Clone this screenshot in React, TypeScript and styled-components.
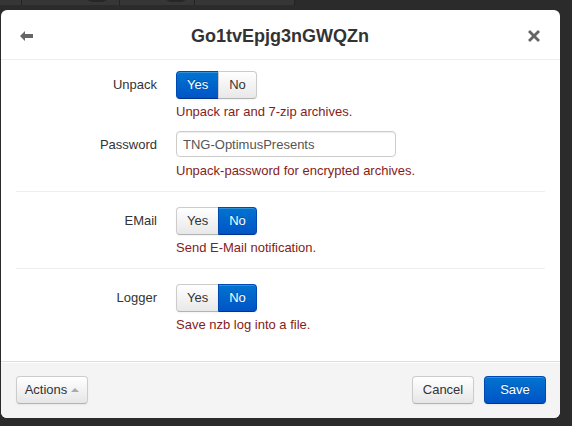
import React from "react";
import styled, { createGlobalStyle, css } from "styled-components";

const Global = createGlobalStyle`
  html, body { margin: 0; padding: 0; }
  body {
    background: #2b2b2b;
    font-family: "Liberation Sans", Arial, Helvetica, sans-serif;
    font-size: 13px;
    line-height: 18px;
    color: #333;
    width: 572px;
    height: 426px;
    overflow: hidden;
  }
`;

const Page = styled.div`
  width: 572px;
  height: 426px;
  display: flex;
  flex-direction: column;
`;

const TopBar = styled.div`
  height: 10px;
  overflow: hidden;
  display: flex;
  align-items: flex-end;
`;

const Toolbar = styled.div`
  display: flex;
  height: 24px;
  margin-bottom: 5px;
  flex-shrink: 0;
`;

const ToolButton = styled.div<{ $w: number }>`
  width: ${(p) => p.$w}px;
  height: 24px;
  background: #363636;
  border-right: 1px solid #242424;
  color: #8a8a8a;
  font-size: 13px;
  line-height: 24px;
  display: flex;
  align-items: center;
  justify-content: center;
  gap: 8px;
  box-sizing: border-box;
`;

const ToolBadge = styled.span`
  display: inline-block;
  width: 26px;
  height: 18px;
  border-radius: 9px;
  background: #262626;
  color: #555;
  font-size: 11px;
  line-height: 18px;
  text-align: center;
`;

const Modal = styled.div`
  margin-left: 1px;
  width: 559px;
  height: 408px;
  background: #fff;
  border-radius: 6px;
  display: flex;
  flex-direction: column;
  overflow: hidden;
`;

const Header = styled.div`
  height: 49px;
  border-bottom: 1px solid #eee;
  display: flex;
  align-items: center;
  padding: 0 18px 0 17px;
  box-sizing: content-box;
`;

const Title = styled.h3`
  flex: 1;
  margin: 0;
  text-align: center;
  font-size: 18px;
  font-weight: bold;
  line-height: 20px;
  color: #333;
  padding-top: 3px;
`;

const IconBtn = styled.span`
  width: 16px;
  height: 16px;
  display: flex;
  align-items: center;
  justify-content: center;
  color: #666;
  margin-top: 2px;
`;

const Body = styled.div`
  flex: 1;
  padding: 0 15px;
`;

const Section = styled.div<{ $first?: boolean; $last?: boolean }>`
  padding: ${(p) => (p.$first ? "11px 0 11px" : "15px 0 11px")};
  border-bottom: ${(p) => (p.$last ? "none" : "1px solid #eee")};
`;

const Group = styled.div`
  display: flex;
  & + & {
    margin-top: 10px;
  }
`;

const Label = styled.label<{ $top?: number }>`
  width: 141px;
  flex-shrink: 0;
  text-align: right;
  padding-right: 19px;
  padding-top: ${(p) => p.$top ?? 5}px;
  line-height: 18px;
  color: #333;
`;

const Controls = styled.div`
  display: flex;
  flex-direction: column;
  align-items: flex-start;
`;

const Help = styled.div<{ $gap?: number }>`
  color: #861b1b;
  margin-top: ${(p) => p.$gap ?? 4}px;
  line-height: 18px;
`;

const btnBase = css`
  font-family: "Liberation Sans", Arial, Helvetica, sans-serif;
  font-size: 13px;
  line-height: 18px;
  padding: 4px 10px;
  height: 28px;
  box-sizing: border-box;
  border: 1px solid #ccc;
  border-bottom-color: #b3b3b3;
  background: linear-gradient(#ffffff, #e6e6e6);
  color: #333;
  border-radius: 4px;
  box-shadow: inset 0 1px 0 rgba(255, 255, 255, 0.2), 0 1px 2px rgba(0, 0, 0, 0.05);
  cursor: pointer;
`;

const primary = css`
  color: #fff;
  background: linear-gradient(#0074d0, #0054c6);
  border-color: #0049b0 #0049b0 #00348a;
  text-shadow: 0 -1px 0 rgba(0, 0, 0, 0.25);
`;

const ButtonGroup = styled.div`
  display: inline-flex;
`;

const SegButton = styled.button<{ $active?: boolean }>`
  ${btnBase};
  padding: 4px 10px;
  ${(p) => p.$active && primary};
  ${(p) =>
    !p.$active &&
    css`
      background: linear-gradient(#ffffff, #e8e8e8);
    `}
  &:first-child {
    border-radius: 4px 0 0 4px;
  }
  &:last-child {
    border-radius: 0 4px 4px 0;
    margin-left: -1px;
  }
`;

const Input = styled.input`
  width: 220px;
  height: 26px;
  box-sizing: border-box;
  border: 1px solid #ccc;
  border-radius: 4px;
  padding: 3px 6px;
  font-family: "Liberation Sans", Arial, Helvetica, sans-serif;
  font-size: 13px;
  color: #555;
  box-shadow: inset 0 1px 1px rgba(0, 0, 0, 0.075);
  outline: none;
`;

const Footer = styled.div`
  height: 56px;
  border-top: 1px solid #ddd;
  background: #f4f4f4;
  display: flex;
  align-items: center;
  padding: 0 14px 0 15px;
  box-shadow: inset 0 1px 0 #fff;
`;

const Spacer = styled.div`
  flex: 1;
`;

const FooterButton = styled.button<{ $primary?: boolean; $w: number }>`
  ${btnBase};
  width: ${(p) => p.$w}px;
  padding: 4px 8px;
  ${(p) => p.$primary && primary};
  & + & {
    margin-left: 10px;
  }
  display: inline-flex;
  align-items: center;
  justify-content: center;
  gap: 4px;
`;

const Caret = styled.span`
  display: inline-block;
  width: 0;
  height: 0;
  border-left: 4px solid transparent;
  border-right: 4px solid transparent;
  border-bottom: 4px solid #aaa;
  margin-top: -1px;
`;

const BackIcon = () => (
  <svg width="13" height="10" viewBox="0 0 13 10">
    <path d="M0 5 L5 0 L5 3 L13 3 L13 7 L5 7 L5 10 Z" fill="#666" />
  </svg>
);

const CloseIcon = () => (
  <svg width="12" height="12" viewBox="0 0 12 12">
    <path
      d="M2 0 L6 4 L10 0 L12 2 L8 6 L12 10 L10 12 L6 8 L2 12 L0 10 L4 6 L0 2 Z"
      fill="#666"
    />
  </svg>
);

const Toggle = ({ yes }: { yes: boolean }) => (
  <ButtonGroup>
    <SegButton $active={yes}>Yes</SegButton>
    <SegButton $active={!yes}>No</SegButton>
  </ButtonGroup>
);

export default function App() {
  return (
    <>
      <Global />
      <Page>
        <TopBar>
          <Toolbar>
            <ToolButton $w={22} />
            <ToolButton $w={98}>
              Deleted <ToolBadge>0</ToolBadge>
            </ToolButton>
            <ToolButton $w={75}>
              Dups <ToolBadge>0</ToolBadge>
            </ToolButton>
            <ToolButton $w={100}>55 Hidden</ToolButton>
          </Toolbar>
        </TopBar>
        <Modal>
          <Header>
            <IconBtn>
              <BackIcon />
            </IconBtn>
            <Title>Go1tvEpjg3nGWQZn</Title>
            <IconBtn>
              <CloseIcon />
            </IconBtn>
          </Header>
          <Body>
            <Section $first>
              <Group>
                <Label>Unpack</Label>
                <Controls>
                  <Toggle yes />
                  <Help>Unpack rar and 7-zip archives.</Help>
                </Controls>
              </Group>
              <Group>
                <Label $top={5}>Password</Label>
                <Controls>
                  <Input defaultValue="TNG-OptimusPresents" />
                  <Help $gap={5}>Unpack-password for encrypted archives.</Help>
                </Controls>
              </Group>
            </Section>
            <Section>
              <Group>
                <Label>EMail</Label>
                <Controls>
                  <Toggle yes={false} />
                  <Help>Send E-Mail notification.</Help>
                </Controls>
              </Group>
            </Section>
            <Section $last>
              <Group>
                <Label>Logger</Label>
                <Controls>
                  <Toggle yes={false} />
                  <Help>Save nzb log into a file.</Help>
                </Controls>
              </Group>
            </Section>
          </Body>
          <Footer>
            <FooterButton $w={72}>
              Actions <Caret />
            </FooterButton>
            <Spacer />
            <FooterButton $w={62}>Cancel</FooterButton>
            <FooterButton $w={62} $primary>
              Save
            </FooterButton>
          </Footer>
        </Modal>
      </Page>
    </>
  );
}
